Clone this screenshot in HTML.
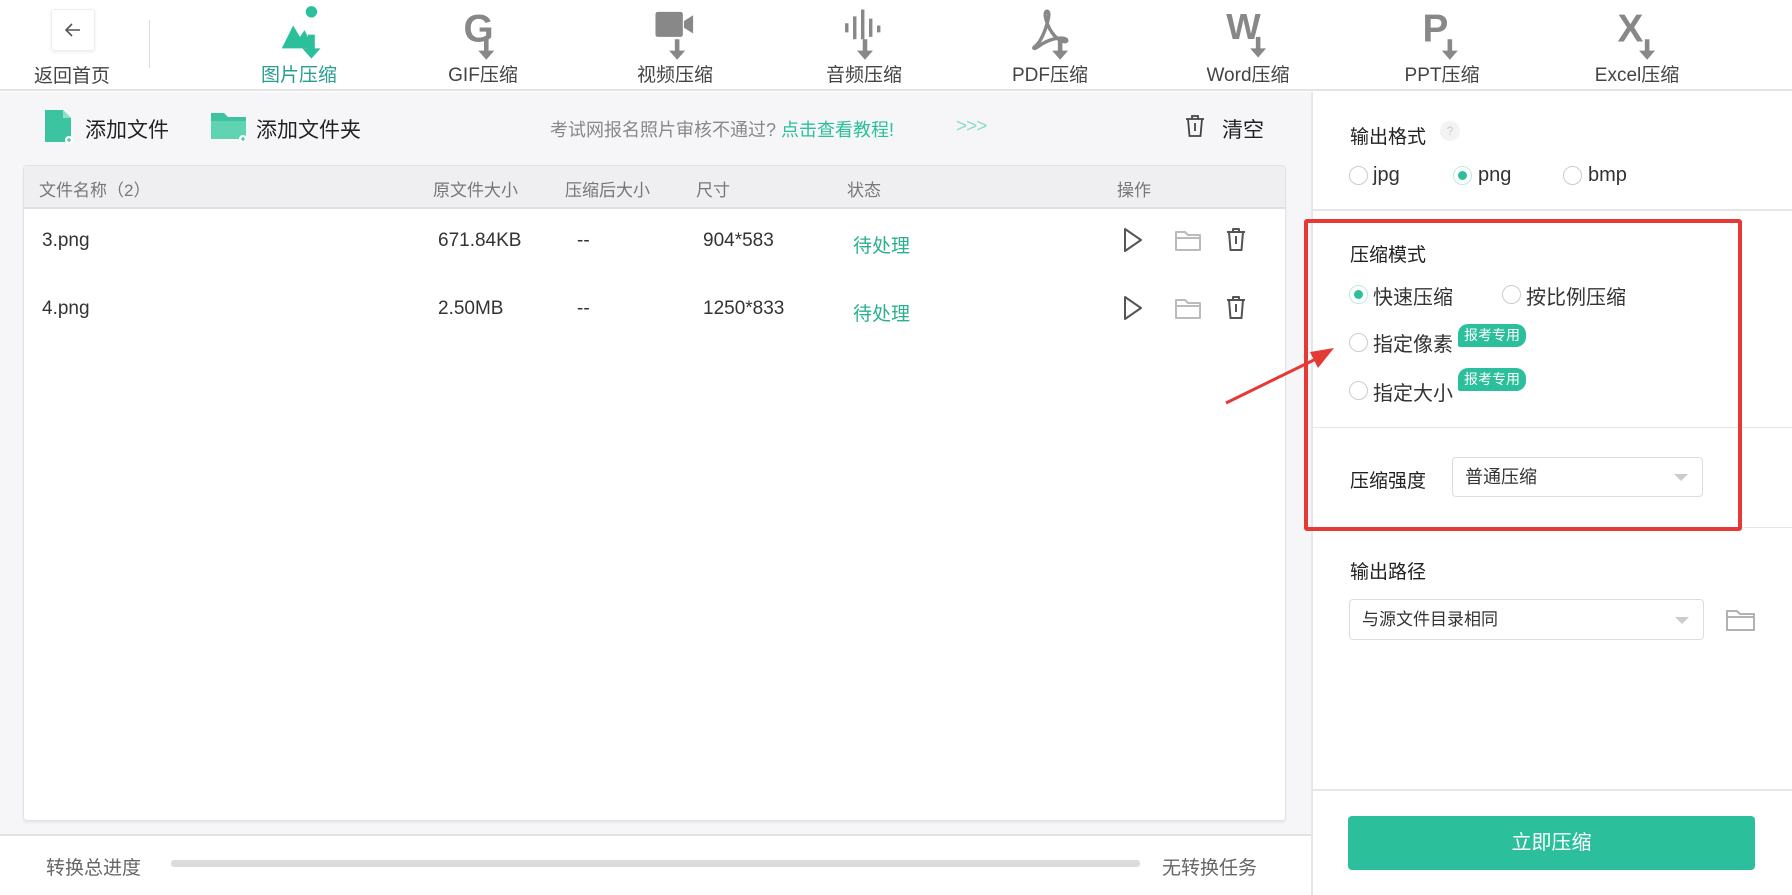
<!DOCTYPE html>
<html><head><meta charset="utf-8"><style>
*{margin:0;padding:0;box-sizing:border-box}
body{width:1792px;height:895px;overflow:hidden;background:#fff;font-family:"Liberation Sans","Noto Sans CJK SC",sans-serif;color:#333;position:relative}
.a{position:absolute;white-space:nowrap}
.nav{position:absolute;top:0;width:120px;text-align:center}
.nav .lb{position:absolute;top:60px;left:0;width:120px;font-size:19px;color:#444}
.nav svg{position:absolute;left:38px;top:5px}
.radio{position:absolute;width:19px;height:19px;border:1px solid #ccc;border-radius:50%;background:#fff}
.radio.on{border-color:#bfe9dc}
.radio.on:after{content:"";position:absolute;left:4px;top:4px;width:9px;height:9px;border-radius:50%;background:#2bbf9b}
.badge{position:absolute;background:#2bbf9b;color:#fff;font-size:14px;border-radius:10px 10px 10px 2px;padding:1px 6px;height:23px;line-height:21px}
.sel{position:absolute;border:1px solid #ddd;border-radius:4px;background:#fff;font-size:18px;color:#333;padding-left:12px}
.sel:after{content:"";position:absolute;right:14px;top:50%;margin-top:-3px;border:7px solid transparent;border-top:7px solid #ccc}
.hd{position:absolute;top:176px;font-size:17px;color:#777}
.cell{position:absolute;font-size:19px;color:#333}
</style></head><body>
<div class="a" style="left:0;top:0;width:1792px;height:91px;background:#fff;border-bottom:2px solid #e3e3e6"></div>
<div class="a" style="left:51px;top:9px;width:44px;height:42px;border:1px solid #eee;border-radius:3px;box-shadow:0 1px 3px rgba(0,0,0,.08)"></div>
<svg class="a" style="left:63px;top:21px" width="20" height="18"><path d="M17 9H3M9 3L3 9l6 6" stroke="#555" stroke-width="1.6" fill="none"/></svg>
<div class="a" style="left:34px;top:61px;font-size:19px;color:#444">返回首页</div>
<div class="a" style="left:149px;top:20px;width:1px;height:48px;background:#ddd"></div>

<div class="nav" style="left:239px"><svg width="46" height="57" viewBox="0 0 40 50"><path d="M4 38L14 18l6 10 4-6 8 16z" fill="#2bbf9b"/><circle cx="30" cy="6" r="5" fill="#2bbf9b"/><path d="M27 26v12h-5l8 9 8-9h-5V26z" fill="#2bbf9b"/></svg><div class="lb" style="color:#2a9d8f">图片压缩</div></div>
<div class="nav" style="left:423px"><svg width="46" height="57" viewBox="0 0 40 50"><text x="2" y="32" font-size="34" font-weight="bold" fill="#888" font-family="Liberation Sans">G</text><path d="M20 30v10h-5l7 8 7-8h-5V30z" fill="#888"/></svg><div class="lb">GIF压缩</div></div>
<div class="nav" style="left:615px"><svg width="46" height="57" viewBox="0 0 40 50"><rect x="2" y="6" width="24" height="22" rx="2" fill="#888"/><path d="M27 14l8-5v16l-8-5z" fill="#888"/><path d="M19 30v10h-5l7 8 7-8h-5V30z" fill="#888"/></svg><div class="lb">视频压缩</div></div>
<div class="nav" style="left:804px"><svg width="46" height="57" viewBox="0 0 40 50"><g stroke="#888" stroke-width="3"><path d="M4 16v8M11 10v20M18 4v26M25 12v16M32 18v6"/></g><path d="M18 30v10h-5l7 8 7-8h-5V30z" fill="#888"/></svg><div class="lb">音频压缩</div></div>
<div class="nav" style="left:990px"><svg width="46" height="57" viewBox="0 0 40 50"><path d="M6 36c4-2 10-14 12-26 1-6-4-6-3 0 2 10 8 20 16 22 4 1 4-3-2-3-8 0-16 4-21 8-3 2-4 1-2-1" stroke="#888" stroke-width="3" fill="none"/><path d="M26 30v10h-5l7 8 7-8h-5V30z" fill="#888"/></svg><div class="lb">PDF压缩</div></div>
<div class="nav" style="left:1188px"><svg width="46" height="57" viewBox="0 0 40 50"><text x="0" y="30" font-size="32" font-weight="bold" fill="#888" font-family="Liberation Sans">W</text><path d="M26 28v10h-5l7 8 7-8h-5V28z" fill="#888"/></svg><div class="lb">Word压缩</div></div>
<div class="nav" style="left:1382px"><svg width="46" height="57" viewBox="0 0 40 50"><text x="2" y="32" font-size="34" font-weight="bold" fill="#888" font-family="Liberation Sans">P</text><path d="M24 30v10h-5l7 8 7-8h-5V30z" fill="#888"/></svg><div class="lb">PPT压缩</div></div>
<div class="nav" style="left:1577px"><svg width="46" height="57" viewBox="0 0 40 50"><text x="2" y="32" font-size="34" font-weight="bold" fill="#888" font-family="Liberation Sans">X</text><path d="M26 30v10h-5l7 8 7-8h-5V30z" fill="#888"/></svg><div class="lb">Excel压缩</div></div>

<div class="a" style="left:0;top:92px;width:1311px;height:742px;background:#f6f6f9"></div>
<svg class="a" style="left:43px;top:108px" width="30" height="36"><path d="M2 2h18l8 8v24H2z" fill="#3cc39f"/><path d="M20 2v8h8" fill="#8fe0c8"/><circle cx="26" cy="32" r="4" fill="#fff"/><path d="M24 32h4M26 30v4" stroke="#3cc39f" stroke-width="1.2"/></svg>
<div class="a" style="left:85px;top:114px;font-size:21px;color:#222">添加文件</div>
<svg class="a" style="left:209px;top:109px" width="40" height="34"><path d="M2 4h13l4 4h18v22H2z" fill="#3cc39f"/><path d="M2 12h35v18H2z" fill="#5fd3b2"/><circle cx="34" cy="30" r="4" fill="#fff"/><path d="M32 30h4M34 28v4" stroke="#3cc39f" stroke-width="1.2"/></svg>
<div class="a" style="left:256px;top:114px;font-size:21px;color:#222">添加文件夹</div>
<div class="a" style="left:550px;top:116px;font-size:18px;color:#888">考试网报名照片审核不通过? <span style="color:#2bbf9b">点击查看教程!</span></div>
<div class="a" style="left:956px;top:116px;font-size:19px;color:#8ddcc6;letter-spacing:-1px">&gt;&gt;&gt;</div>
<svg class="a" style="left:1183px;top:113px" width="24" height="26"><path d="M3 6h18M9 6V3h6v3M5 6l1.5 17h11L19 6M12 10v8" stroke="#444" stroke-width="1.8" fill="none"/></svg>
<div class="a" style="left:1222px;top:114px;font-size:21px;color:#222">清空</div>

<div class="a" style="left:23px;top:165px;width:1263px;height:656px;background:#fff;border:1px solid #e2e2e6;border-radius:4px;box-shadow:0 2px 2px rgba(0,0,0,.06)"></div>
<div class="a" style="left:24px;top:166px;width:1261px;height:43px;background:#efeff1;border-bottom:2px solid #e0e0e3;border-radius:4px 4px 0 0"></div>
<div class="hd" style="left:39px">文件名称（2）</div>
<div class="hd" style="left:433px">原文件大小</div>
<div class="hd" style="left:565px">压缩后大小</div>
<div class="hd" style="left:696px">尺寸</div>
<div class="hd" style="left:847px">状态</div>
<div class="hd" style="left:1117px">操作</div>

<div class="cell" style="left:42px;top:230px">3.png</div>
<div class="cell" style="left:438px;top:230px">671.84KB</div>
<div class="cell" style="left:577px;top:230px">--</div>
<div class="cell" style="left:703px;top:230px">904*583</div>
<div class="cell" style="left:853px;top:231px;color:#2bb08f">待处理</div>
<div class="cell" style="left:42px;top:298px">4.png</div>
<div class="cell" style="left:438px;top:298px">2.50MB</div>
<div class="cell" style="left:577px;top:298px">--</div>
<div class="cell" style="left:703px;top:298px">1250*833</div>
<div class="cell" style="left:853px;top:299px;color:#2bb08f">待处理</div>

<svg class="a" style="left:1120px;top:226px" width="150" height="100">
<g fill="none" stroke-width="2" stroke-linejoin="round">
<path d="M5 3l16 11L5 25z" stroke="#555"/><path d="M5 71l16 11L5 93z" stroke="#555"/>
<path d="M56 6h9l3 3h12v15H56z M56 12h24" stroke="#bbb"/><path d="M56 74h9l3 3h12v15H56z M56 80h24" stroke="#bbb"/>
<path d="M107 6h18M113 6V3h6v3M109 6l1.5 18h11L123 6M116 10v8" stroke="#555"/>
<path d="M107 74h18M113 74v-3h6v3M109 74l1.5 18h11L123 74M116 78v8" stroke="#555"/>
</g></svg>

<div class="a" style="left:0;top:834px;width:1311px;height:61px;background:#fff;border-top:2px solid #e3e3e6"></div>
<div class="a" style="left:46px;top:853px;font-size:19px;color:#666">转换总进度</div>
<div class="a" style="left:171px;top:860px;width:969px;height:7px;background:#dcdcdf;border-radius:3px"></div>
<div class="a" style="left:1162px;top:853px;font-size:19px;color:#666">无转换任务</div>

<div class="a" style="left:1311px;top:92px;width:2px;height:803px;background:#e6e6e9"></div>
<div class="a" style="left:1350px;top:122px;font-size:19px;color:#222">输出格式</div>
<div class="a" style="left:1440px;top:121px;width:20px;height:20px;border-radius:50%;background:#f3f3f3;color:#ccc;font-size:12px;text-align:center;line-height:20px">?</div>
<div class="radio" style="left:1349px;top:166px"></div><div class="a" style="left:1373px;top:164px;font-size:20px">jpg</div>
<div class="radio on" style="left:1453px;top:166px"></div><div class="a" style="left:1478px;top:164px;font-size:20px">png</div>
<div class="radio" style="left:1563px;top:166px"></div><div class="a" style="left:1588px;top:164px;font-size:20px">bmp</div>
<div class="a" style="left:1313px;top:209px;width:479px;height:2px;background:#e6e6e9"></div>

<div class="a" style="left:1350px;top:240px;font-size:19px;color:#222">压缩模式</div>
<div class="radio on" style="left:1349px;top:285px"></div><div class="a" style="left:1373px;top:281px;font-size:20px">快速压缩</div>
<div class="radio" style="left:1502px;top:285px"></div><div class="a" style="left:1526px;top:281px;font-size:20px">按比例压缩</div>
<div class="radio" style="left:1349px;top:333px"></div><div class="a" style="left:1373px;top:328px;font-size:20px">指定像素</div>
<div class="badge" style="left:1458px;top:324px">报考专用</div>
<div class="radio" style="left:1349px;top:381px"></div><div class="a" style="left:1373px;top:377px;font-size:20px">指定大小</div>
<div class="badge" style="left:1458px;top:368px">报考专用</div>
<div class="a" style="left:1313px;top:427px;width:479px;height:1px;background:#e6e6e9"></div>
<div class="a" style="left:1350px;top:466px;font-size:19px;color:#222">压缩强度</div>
<div class="sel" style="left:1452px;top:457px;width:251px;height:40px;line-height:38px">普通压缩</div>
<div class="a" style="left:1313px;top:527px;width:479px;height:1px;background:#e6e6e9"></div>

<div class="a" style="left:1304px;top:219px;width:438px;height:312px;border:4px solid #e53935;border-radius:3px"></div>
<svg class="a" style="left:1220px;top:340px" width="120" height="70"><path d="M6 63L100 17" stroke="#e53935" stroke-width="3"/><path d="M114 8L90 12l8 16z" fill="#e53935"/></svg>

<div class="a" style="left:1350px;top:557px;font-size:19px;color:#222">输出路径</div>
<div class="sel" style="left:1349px;top:599px;width:355px;height:41px;line-height:39px;font-size:17px">与源文件目录相同</div>
<svg class="a" style="left:1725px;top:608px" width="32" height="24"><path d="M2 3h10l3 3h14v16H2z M2 9h27" stroke="#aaa" stroke-width="1.8" fill="none"/></svg>
<div class="a" style="left:1313px;top:789px;width:479px;height:2px;background:#e6e6e9"></div>
<div class="a" style="left:1348px;top:816px;width:407px;height:54px;background:#2bbf9b;border-radius:4px;color:#fff;font-size:20px;text-align:center;line-height:54px">立即压缩</div>
</body></html>
